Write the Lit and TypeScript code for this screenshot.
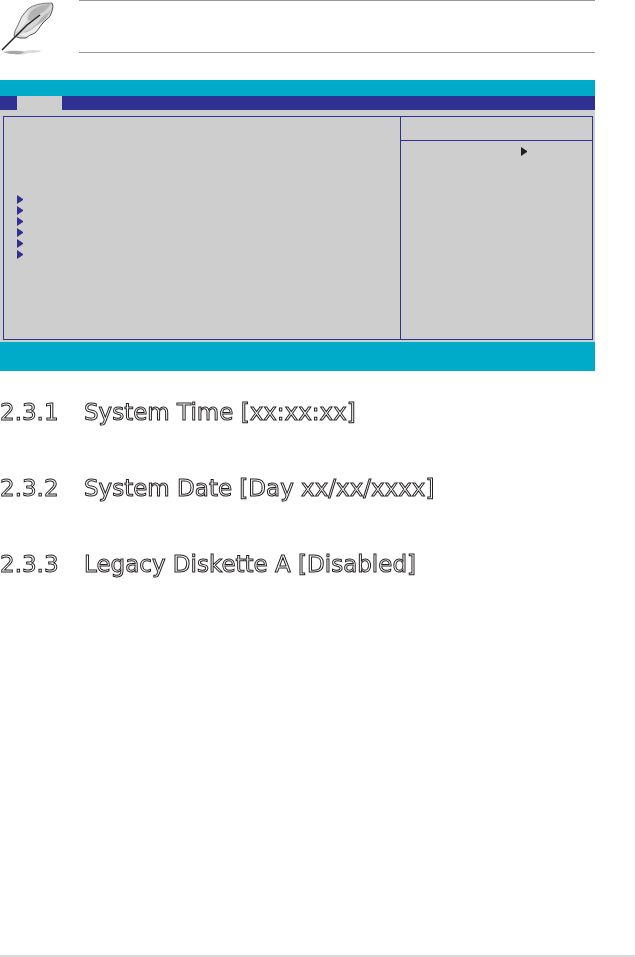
import { LitElement, html, css, svg } from "lit";
import { customElement } from "lit/decorators.js";

const SECTIONS = [
  { number: "2.3.1", title: "System Time [xx:xx:xx]" },
  { number: "2.3.2", title: "System Date [Day xx/xx/xxxx]" },
  { number: "2.3.3", title: "Legacy Diskette A [Disabled]" },
];

const MENU_ROWS = [0, 1, 2, 3, 4, 5];

const arrow = html`<svg class="arrow" viewBox="0 0 6 9" aria-hidden="true">
  ${svg`<path d="M0 0L6 4V5L0 9Z" fill="currentColor"/>`}
</svg>`;

// Quill pen used beside notes.
@customElement("quill-icon")
class QuillIcon extends LitElement {
  static styles = css`
    :host { display: block; }
    svg { display: block; width: 56px; height: 56px; }
  `;

  render() {
    return html`<svg viewBox="0 0 56 56" aria-hidden="true">
      <path d="M2 52Q10 49 24 51Q34 49 42 51Q38 53 29 53Q22 56 14 54Q6 54 2 52Z" fill="#dcdcdc" />
      <path d="M4 52Q14 50 25 52L20 54Q12 55 4 52Z" fill="#a6a6a6" />
      <path d="M14 36L15 31L18 25Q20 17 28 9Q35 3 52 3L53 6L52 11Q51 17 46 20L42 24Q38 30 35 33Q29 35 26 38Q20 39 14 36Z" fill="#d6d6d6" />
      <path d="M28 20Q28 11 37 7Q44 4 51 4Q47 10 40 14L31 21Z" fill="#b4b4b4" />
      <path d="M16 32Q18 18 29 10Q25 19 27 21L18 31Z" fill="#e9e9e9" />
      <path d="M24 32Q36 28 41 18L51 10L46 19L41 23Q36 29 27 33Z" fill="#b4b4b4" />
      <path d="M19 34Q29 33 36 26L42 22Q38 31 31 35Q24 38 19 34Z" fill="#eeeeee" />
      <path d="M14 36L15 31L18 25Q20 17 28 9Q35 3 52 3" fill="none" stroke="#777" />
      <path d="M52 3L53 6L52 11Q51 17 46 20L42 24Q38 30 35 33Q29 35 26 38Q20 39 14 36" fill="none" stroke="#555" />
      <path d="M2 50L15 37L27 25L40 15" fill="none" stroke="#222" stroke-width="1.5" />
    </svg>`;
  }
}

@customElement("bios-screen")
class BiosScreen extends LitElement {
  static styles = css`
    :host { display: block; background: #cecece; color: #2e3092; }
    .title { height: 16px; background: #00abc9; }
    .menu { display: flex; height: 14px; padding-left: 17px; background: #2e3092; }
    .tab { width: 45px; padding: 0; border: 0; background: #cecece; }
    .frame {
      display: grid;
      grid-template-columns: 1fr 192px;
      min-height: 222px;
      margin: 6px 2px 2px 3px;
      border: 1px solid #2e3092;
    }
    .items {
      display: flex;
      flex-direction: column;
      gap: 2px;
      margin: 0;
      padding: 78px 13px 0;
      list-style: none;
    }
    .items li { height: 9px; }
    .arrow { display: block; width: 6px; height: 9px; }
    .help { border-left: 1px solid #2e3092; }
    .help-title { height: 23px; border-bottom: 1px solid #2e3092; }
    .help-body { padding: 6px 0 0 120px; color: #231f20; }
    .keys { height: 29px; background: #00abc9; }
  `;

  render() {
    return html`
      <div class="title"></div>
      <nav class="menu"><button class="tab" type="button" aria-label="Main"></button></nav>
      <div class="frame">
        <ul class="items">
          ${MENU_ROWS.map(() => html`<li>${arrow}</li>`)}
        </ul>
        <aside class="help">
          <div class="help-title"></div>
          <div class="help-body">${arrow}</div>
        </aside>
      </div>
      <div class="keys"></div>
    `;
  }
}

@customElement("app-root")
class AppRoot extends LitElement {
  static styles = css`
    :host {
      display: flex;
      flex-direction: column;
      box-sizing: border-box;
      min-height: 100vh;
      background: #fff;
      border-bottom: 2px solid #d8d8d8;
      font-family: "DejaVu Sans", sans-serif;
    }
    main { padding-right: 40px; }
    .note {
      display: grid;
      grid-template-columns: 79px 1fr;
      align-items: start;
      height: 80px;
    }
    .note-text {
      height: 51px;
      border-top: 1px solid #999;
      border-bottom: 1px solid #999;
    }
    .sections { display: grid; gap: 48px; padding-top: 27px; will-change: opacity; }
    h2 {
      display: grid;
      grid-template-columns: 84px 1fr;
      margin: 0;
      font-size: 23px;
      line-height: 28px;
      font-weight: 400;
      color: #fff;
      -webkit-text-stroke: 1px #231f20;
    }
  `;

  render() {
    return html`
      <main>
        <div class="note">
          <quill-icon></quill-icon>
          <div class="note-text"></div>
        </div>
        <bios-screen></bios-screen>
        <div class="sections">
          ${SECTIONS.map(
            (s) => html`<h2><span>${s.number}</span><span>${s.title}</span></h2>`
          )}
        </div>
      </main>
    `;
  }
}
